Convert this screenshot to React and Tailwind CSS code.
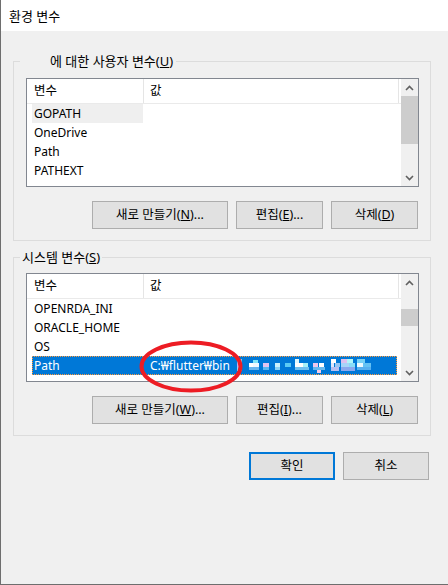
import React from "react";

const FONT = "font-['Noto_Sans','Noto_Sans_CJK_KR',sans-serif]";

const BLOCKS = [
  [0, 0, 5, 4, "#6fd0f5"], [0, 4, 5, 4, "#c4aeee"], [0, 8, 5, 4, "#8ed8f6"],
  [12, 4, 4, 4, "#ffffff"], [16, 1, 5, 3, "#7fe4f8"], [16, 4, 6, 4, "#f0f8ff"], [12, 8, 10, 3, "#6ab6ee"],
  [26, 4, 6, 4, "#e2c4f0"], [26, 8, 6, 3, "#5ab8f2"],
  [38, 4, 5, 4, "#c8f0fc"], [38, 8, 5, 3, "#86d0f6"],
  [48, 4, 6, 4, "#5ccaf4"],
  [58, 0, 4, 4, "#e0f8ff"], [58, 4, 8, 4, "#ffffff"], [66, 4, 5, 4, "#a6f0f8"], [58, 8, 14, 3, "#70c0f0"],
  [76, 4, 5, 4, "#f0c8ec"], [82, 4, 5, 4, "#ffffff"], [76, 8, 12, 3, "#68baf0"], [80, 11, 4, 3, "#f6cce6"],
  [94, 0, 5, 4, "#ffffff"], [94, 4, 3, 4, "#e0e6fb"], [98, 4, 5, 4, "#96c6f4"], [94, 8, 8, 4, "#b8c0f2"],
  [104, 0, 6, 4, "#dcc0f0"], [104, 4, 8, 4, "#a8d4f8"], [110, 0, 6, 4, "#b0f6fa"], [112, 4, 6, 4, "#88dcf8"], [104, 8, 14, 4, "#8aa8ee"],
  [120, 0, 8, 4, "#78d2f6"], [120, 4, 6, 4, "#ecfaff"], [126, 4, 8, 4, "#64c2f4"], [120, 8, 14, 3, "#56b0f0"],
];

function Chevron({ up }) {
  return (
    <svg width="9" height="6" viewBox="0 0 9 6">
      <polyline
        points={up ? "1,5 4.5,1.5 8,5" : "1,1 4.5,4.5 8,1"}
        fill="none"
        stroke="#606060"
        strokeWidth="1.6"
      />
    </svg>
  );
}

function Scrollbar({ thumbTop, thumbH }) {
  return (
    <div className="w-[17px] bg-[#f0f0f0] flex flex-col">
      <div className="h-[17px] flex items-center justify-center">
        <Chevron up />
      </div>
      <div className="flex-1 flex flex-col">
        <div className="bg-[#cdcdcd]" style={{ marginTop: thumbTop, height: thumbH }} />
      </div>
      <div className="h-[17px] flex items-center justify-center">
        <Chevron />
      </div>
    </div>
  );
}

function ListBox({ rows, thumbTop, thumbH }) {
  return (
    <div className="ml-[12px] mr-[11px] h-[109px] border border-[#828790] bg-white flex">
      <div className="flex-1 flex flex-col overflow-hidden">
        <div className="h-[25px] flex border-b border-[#eaeaea] shrink-0">
          <div className="w-[117px] border-r border-[#e5e5e5] pl-[7px] flex items-center text-black text-[12.5px]">변수</div>
          <div className="w-[255px] border-r border-[#e5e5e5] pl-[6px] flex items-center text-black text-[12.5px]">값</div>
        </div>
        {rows.map((r, i) => (
          <div
            key={i}
            className={
              "ml-[5px] w-[365px] h-[19px] shrink-0 flex items-center " +
              (r.selected ? "bg-[#0078d7] text-white outline outline-1 outline-dotted outline-[#ff9a3c] -outline-offset-1" : "text-black")
            }
          >
            <div className={"w-[111px] h-full pl-[2px] flex items-center " + (r.hover ? "bg-[#efefef]" : "")}>{r.name}</div>
            <div className="flex-1 h-full pl-[7px] flex items-center whitespace-nowrap">{r.value}</div>
          </div>
        ))}
      </div>
      <Scrollbar thumbTop={thumbTop} thumbH={thumbH} />
    </div>
  );
}

function Btn({ w, children, primary }) {
  return (
    <div
      className={
        "h-[28px] flex items-center justify-center bg-[#e1e1e1] text-black text-[12.5px] " +
        (primary ? "border-2 border-[#0078d7]" : "border border-[#adadad]")
      }
      style={{ width: w }}
    >
      {children}
    </div>
  );
}

export default function App() {
  return (
    <div className={"relative w-[448px] h-[585px] bg-[#f0f0f0] border-l border-b border-[#6e6e6e] text-[12px] leading-[16px] text-black overflow-hidden " + FONT}>
      <div className="h-[31px] bg-white flex items-center pl-[8px] text-[13px]">환경 변수</div>

      <fieldset className="ml-[12px] mt-[22px] w-[418px] border border-[#dcdcdc] pt-[9px] pb-[11px]">
        <legend className="ml-[6px] pl-[30px] pr-[3px] leading-[16px] text-[13px]">
          에 대한 사용자 변수(<span className="underline">U</span>)
        </legend>
        <ListBox
          rows={[
            { name: "GOPATH", hover: true },
            { name: "OneDrive" },
            { name: "Path" },
            { name: "PATHEXT" },
          ]}
          thumbTop={0}
          thumbH={48}
        />
        <div className="mt-[14px] mr-[12px] flex justify-end gap-[8px]">
          <Btn w={136}>새로 만들기(<span className="underline">N</span>)...</Btn>
          <Btn w={87}>편집(<span className="underline">E</span>)...</Btn>
          <Btn w={87}>삭제(<span className="underline">D</span>)</Btn>
        </div>
      </fieldset>

      <fieldset className="ml-[12px] mt-[8px] w-[418px] border border-[#dcdcdc] pt-[8px] pb-[11px]">
        <legend className="ml-[6px] px-[2px] leading-[16px] text-[13px]">
          시스템 변수(<span className="underline">S</span>)
        </legend>
        <ListBox
          rows={[
            { name: "OPENRDA_INI" },
            { name: "ORACLE_HOME" },
            { name: "OS" },
            {
              name: "Path",
              selected: true,
              value: (
                <span className="flex items-center">
                  <span>C:₩flutter₩bin</span>
                  <svg width="136" height="14" className="ml-[7px]">
                    {BLOCKS.map((b, i) => (
                      <rect key={i} x={b[0]} y={b[1]} width={b[2]} height={b[3]} fill={b[4]} />
                    ))}
                  </svg>
                </span>
              ),
            },
          ]}
          thumbTop={18}
          thumbH={17}
        />
        <div className="mt-[14px] mr-[12px] flex justify-end gap-[8px]">
          <Btn w={136}>새로 만들기(<span className="underline">W</span>)...</Btn>
          <Btn w={87}>편집(<span className="underline">I</span>)...</Btn>
          <Btn w={87}>삭제(<span className="underline">L</span>)</Btn>
        </div>
      </fieldset>

      <div className="mt-[16px] mr-[19px] flex justify-end gap-[8px]">
        <Btn w={86} primary>확인</Btn>
        <Btn w={86}>취소</Btn>
      </div>

      <svg className="absolute left-[138px] top-[340px]" width="104" height="53" viewBox="0 0 104 53">
        <ellipse cx="52" cy="26.5" rx="49.5" ry="24" fill="none" stroke="#ed1c24" strokeWidth="4" />
      </svg>
    </div>
  );
}
